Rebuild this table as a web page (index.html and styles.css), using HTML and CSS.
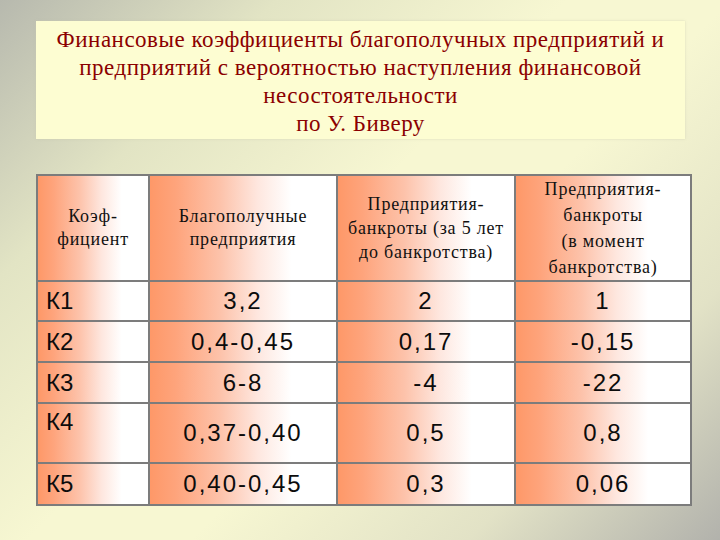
FILE: index.html
```html
<!DOCTYPE html>
<html lang="ru">
<head>
<meta charset="utf-8">
<link rel="stylesheet" href="styles.css">
</head>
<body>
<div class="slide">
  <div class="title">
    Финансовые коэффициенты благополучных предприятий и<br>
    предприятий с вероятностью наступления финансовой<br>
    несостоятельности<br>
    по У. Биверу
  </div>
  <table class="grid">
    <colgroup>
      <col class="c1"><col class="c2"><col class="c3"><col class="c4">
    </colgroup>
    <tr class="head">
      <th>Коэф-<br>фициент</th>
      <th>Благополучные<br>предприятия</th>
      <th class="mid">Предприятия-<br>банкроты (за 5 лет<br>до банкротства)</th>
      <th class="loose">Предприятия-<br>банкроты<br>(в момент<br>банкротства)</th>
    </tr>
    <tr class="r1"><td class="name">К1</td><td>3,2</td><td>2</td><td>1</td></tr>
    <tr class="r2"><td class="name">К2</td><td>0,4-0,45</td><td>0,17</td><td>-0,15</td></tr>
    <tr class="r3"><td class="name">К3</td><td>6-8</td><td>-4</td><td>-22</td></tr>
    <tr class="r4"><td class="name top">К4</td><td>0,37-0,40</td><td>0,5</td><td>0,8</td></tr>
    <tr class="r5"><td class="name">К5</td><td>0,40-0,45</td><td>0,3</td><td>0,06</td></tr>
  </table>
</div>
</body>
</html>
```
FILE: styles.css
```css
html, body {
  margin: 0;
  padding: 0;
}
body {
  width: 720px;
  height: 540px;
  overflow: hidden;
  background: linear-gradient(135deg, #b7b9ae 0%, #e2e4c4 22%, #f7f7d2 45%, #f7f7d2 58%, #e2e2c6 80%, #b2b2ac 100%);
}
.slide {
  padding: 21px 30px 0 36px;
  display: flex;
  flex-direction: column;
  gap: 35px;
}
.title {
  width: 649px;
  box-sizing: border-box;
  height: 118px;
  padding-top: 5px;
  background: #fdfdd2;
  box-shadow: 0 0 2px rgba(200, 200, 170, 0.6);
  color: #8b0000;
  font-family: "Liberation Serif", "Times New Roman", serif;
  font-size: 23px;
  letter-spacing: 0.5px;
  line-height: 28px;
  text-align: center;
}
.grid {
  border-collapse: collapse;
  width: 654px;
  table-layout: fixed;
  border: 2px solid #7c7c7c;
}
.c1 { width: 112px; }
.c2 { width: 188px; }
.c3 { width: 178px; }
.c4 { width: 176px; }
.grid th, .grid td {
  border: 2px solid #7c7c7c;
  padding: 0;
  background: linear-gradient(to right, #fe9868 0%, #fea47c 14%, #fdc3ab 38%, #fee7df 58%, #ffffff 76%, #ffffff 100%);
  vertical-align: middle;
  text-align: center;
}
.grid th {
  height: 104px;
  font-family: "Liberation Serif", "Times New Roman", serif;
  font-weight: normal;
  font-size: 18px;
  letter-spacing: 0.8px;
  line-height: 23px;
  color: #111;
}
.grid th.mid {
  line-height: 24px;
}
.grid th.loose {
  line-height: 26px;
}
.grid td {
  font-family: "Liberation Sans", Arial, sans-serif;
  font-size: 24px;
  letter-spacing: 2px;
  color: #0c0c0c;
}
.grid td.name {
  text-align: left;
  padding-left: 8px;
  letter-spacing: 0;
}
.grid td.top {
  vertical-align: top;
  padding-top: 4px;
}
.r1 td { height: 38px; }
.r2 td { height: 39px; }
.r3 td { height: 39px; }
.r4 td { height: 54px; }
.r5 td { height: 40px; }
```
